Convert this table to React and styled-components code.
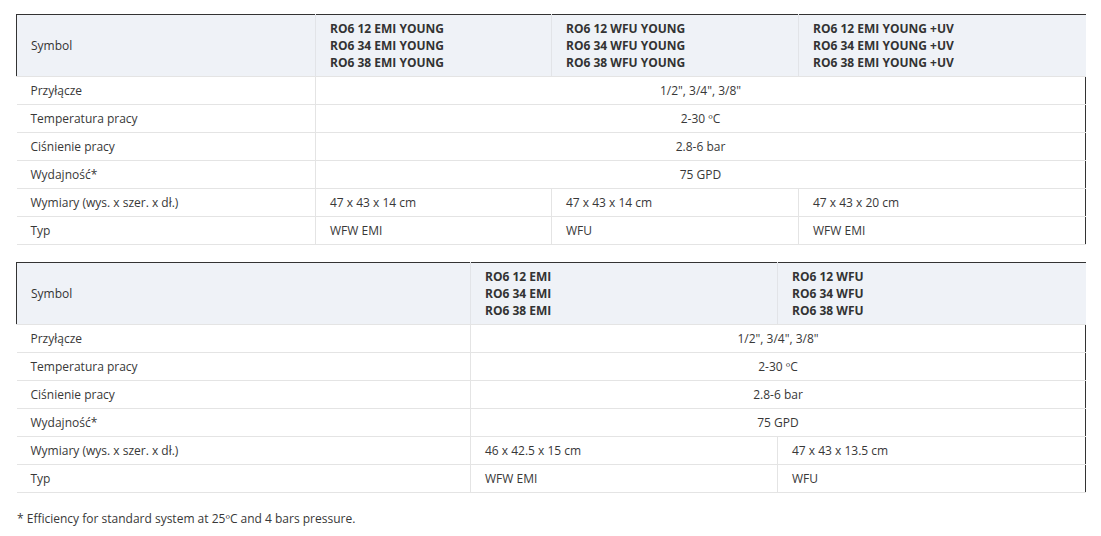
import React from 'react';
import styled, { createGlobalStyle } from 'styled-components';

const GlobalStyle = createGlobalStyle`
  body {
    margin: 0;
    background: #fff;
    font-family: "Open Sans", "Noto Sans", Arial, sans-serif;
    color: #383838;
  }
`;

const Page = styled.div`
  padding: 14px 15px 0 16px;
  width: 1070px;
`;

const Table = styled.table`
  width: 1069px;
  border-collapse: collapse;
  table-layout: fixed;
  font-size: 12px;
  border-top: 1px solid #333;
  margin-bottom: 17px;
`;

const HeadRow = styled.tr`
  background: #eff2f7;
  height: 62px;
`;

const HeadCell = styled.th`
  text-align: left;
  font-weight: ${p => (p.$bold ? 700 : 400)};
  line-height: 17px;
  padding: 4px 14px;
  vertical-align: middle;
  border-left: 1px solid ${p => (p.$first ? '#333' : '#e2e4e8')};
  border-bottom: 1px solid #e4e4e4;
  color: #333;
`;

const Row = styled.tr`
  height: 28px;
`;

const Cell = styled.td`
  padding: 0 14px;
  text-align: ${p => (p.$center ? 'center' : 'left')};
  border-bottom: 1px solid #e4e4e4;
  border-left: ${p => (p.$first ? 'none' : '1px solid #e4e4e4')};
  border-right: ${p => (p.$last ? '1px solid #333' : 'none')};
  white-space: nowrap;
`;

const Note = styled.p`
  margin: 0;
  padding-left: 1px;
  font-size: 12px;
`;

const table1 = {
  cols: [299, 236, 247, 287],
  heads: [
    ['RO6 12 EMI YOUNG', 'RO6 34 EMI YOUNG', 'RO6 38 EMI YOUNG'],
    ['RO6 12 WFU YOUNG', 'RO6 34 WFU YOUNG', 'RO6 38 WFU YOUNG'],
    ['RO6 12 EMI YOUNG +UV', 'RO6 34 EMI YOUNG +UV', 'RO6 38 EMI YOUNG +UV'],
  ],
  sizes: ['47 x 43 x 14 cm', '47 x 43 x 14 cm', '47 x 43 x 20 cm'],
  types: ['WFW EMI', 'WFU', 'WFW EMI'],
};

const table2 = {
  cols: [454, 307, 308],
  heads: [
    ['RO6 12 EMI', 'RO6 34 EMI', 'RO6 38 EMI'],
    ['RO6 12 WFU', 'RO6 34 WFU', 'RO6 38 WFU'],
  ],
  sizes: ['46 x 42.5 x 15 cm', '47 x 43 x 13.5 cm'],
  types: ['WFW EMI', 'WFU'],
};

const shared = [
  ['Przyłącze', '1/2", 3/4", 3/8"'],
  ['Temperatura pracy', '2-30 ºC'],
  ['Ciśnienie pracy', '2.8-6 bar'],
  ['Wydajność*', '75 GPD'],
];

const SpecTable = ({ data }) => {
  const n = data.heads.length;
  return (
    <Table>
      <colgroup>
        {data.cols.map((w, i) => (
          <col key={i} style={{ width: w }} />
        ))}
      </colgroup>
      <thead>
        <HeadRow>
          <HeadCell $first>Symbol</HeadCell>
          {data.heads.map((lines, i) => (
            <HeadCell key={i} $bold>
              {lines.map(l => (
                <div key={l}>{l}</div>
              ))}
            </HeadCell>
          ))}
        </HeadRow>
      </thead>
      <tbody>
        {shared.map(([label, value]) => (
          <Row key={label}>
            <Cell $first>{label}</Cell>
            <Cell colSpan={n} $center $last>
              {value}
            </Cell>
          </Row>
        ))}
        <Row>
          <Cell $first>Wymiary (wys. x szer. x dł.)</Cell>
          {data.sizes.map((s, i) => (
            <Cell key={i} $last={i === n - 1}>{s}</Cell>
          ))}
        </Row>
        <Row>
          <Cell $first>Typ</Cell>
          {data.types.map((t, i) => (
            <Cell key={i} $last={i === n - 1}>{t}</Cell>
          ))}
        </Row>
      </tbody>
    </Table>
  );
};

export default function App() {
  return (
    <Page>
      <GlobalStyle />
      <SpecTable data={table1} />
      <SpecTable data={table2} />
      <Note>* Efficiency for standard system at 25ºC and 4 bars pressure.</Note>
    </Page>
  );
}
